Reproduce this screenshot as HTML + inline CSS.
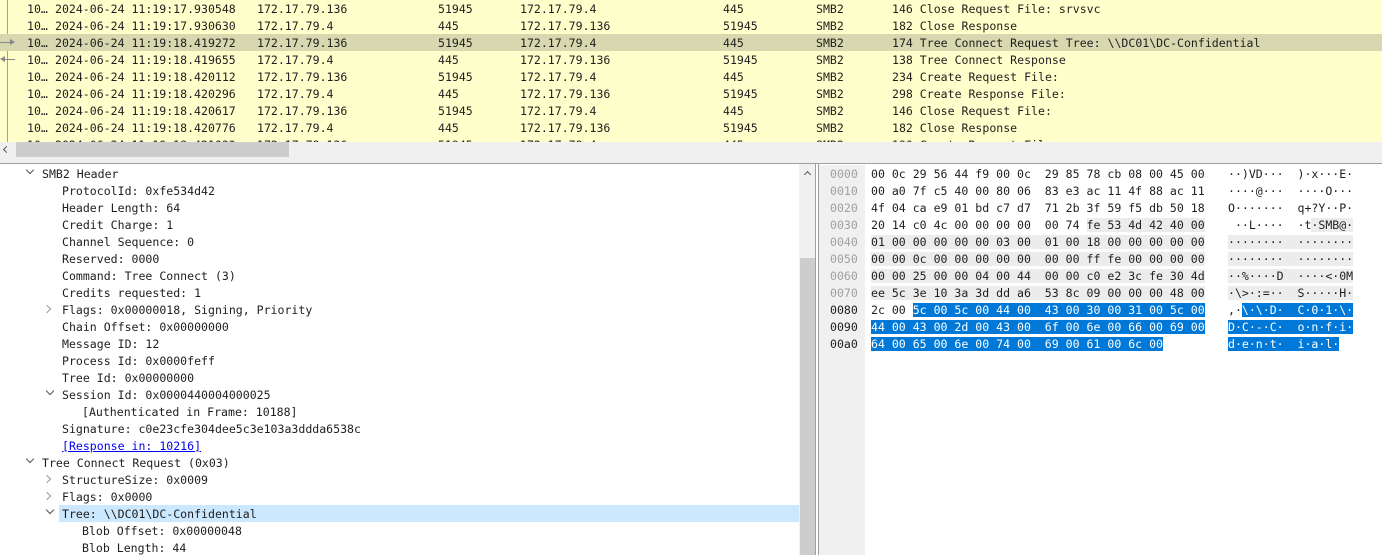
<!DOCTYPE html>
<html><head><meta charset="utf-8"><style>
*{margin:0;padding:0;box-sizing:border-box}
body{width:1382px;height:555px;overflow:hidden;background:#fff;font-family:"DejaVu Sans Mono","Liberation Mono",monospace;font-size:11.55px;color:#1e1e1e;position:relative}
.pl{position:absolute;left:0;top:0;width:1382px;height:142px;background:#ffffcc;overflow:hidden}
.r{position:absolute;left:0;width:1382px;height:17px;line-height:18px;white-space:pre}
.r span{position:absolute;top:0}
.hl{background:#d8d8b0}
.vline{position:absolute;left:7px;top:0;width:1px;height:142px;background:#a0a0a0}
.hs{position:absolute;left:0;top:142px;width:1382px;height:16px;background:#f0f0f0}
.sep{position:absolute;left:0;top:163px;width:1382px;height:1px;background:#a0a0a0}
.t{position:absolute;height:17px;line-height:18px;white-space:pre}
.hx{position:absolute;height:17px;line-height:18px;white-space:pre}
.g{background:#ececec}.b{background:#0078d7;color:#fff}
.arr{position:absolute;width:6px;height:6px;border-right:1.3px solid #555;border-bottom:1.3px solid #555}
</style></head><body>
<div class="pl">
<div class="vline"></div>
<div class="r" style="top:0"><span style="left:27px">10…</span><span style="left:55px">2024-06-24 11:19:17.930548</span><span style="left:257px">172.17.79.136</span><span style="left:438px">51945</span><span style="left:520px">172.17.79.4</span><span style="left:723px">445</span><span style="left:816px">SMB2</span><span style="left:892px">146 Close Request File: srvsvc</span></div>
<div class="r" style="top:17px"><span style="left:27px">10…</span><span style="left:55px">2024-06-24 11:19:17.930630</span><span style="left:257px">172.17.79.4</span><span style="left:438px">445</span><span style="left:520px">172.17.79.136</span><span style="left:723px">51945</span><span style="left:816px">SMB2</span><span style="left:892px">182 Close Response</span></div>
<div class="r hl" style="top:34px"><span style="left:27px">10…</span><span style="left:55px">2024-06-24 11:19:18.419272</span><span style="left:257px">172.17.79.136</span><span style="left:438px">51945</span><span style="left:520px">172.17.79.4</span><span style="left:723px">445</span><span style="left:816px">SMB2</span><span style="left:892px">174 Tree Connect Request Tree: \\DC01\DC-Confidential</span><span style="left:0;top:8px;width:14px;height:1px;background:#888"></span><span style="left:10px;top:5px;width:0;height:0;border-left:5px solid #888;border-top:3px solid transparent;border-bottom:3px solid transparent"></span></div>
<div class="r" style="top:51px"><span style="left:27px">10…</span><span style="left:55px">2024-06-24 11:19:18.419655</span><span style="left:257px">172.17.79.4</span><span style="left:438px">445</span><span style="left:520px">172.17.79.136</span><span style="left:723px">51945</span><span style="left:816px">SMB2</span><span style="left:892px">138 Tree Connect Response</span><span style="left:2px;top:8px;width:13px;height:1px;background:#888"></span><span style="left:0;top:5px;width:0;height:0;border-right:5px solid #888;border-top:3px solid transparent;border-bottom:3px solid transparent"></span></div>
<div class="r" style="top:68px"><span style="left:27px">10…</span><span style="left:55px">2024-06-24 11:19:18.420112</span><span style="left:257px">172.17.79.136</span><span style="left:438px">51945</span><span style="left:520px">172.17.79.4</span><span style="left:723px">445</span><span style="left:816px">SMB2</span><span style="left:892px">234 Create Request File:</span></div>
<div class="r" style="top:85px"><span style="left:27px">10…</span><span style="left:55px">2024-06-24 11:19:18.420296</span><span style="left:257px">172.17.79.4</span><span style="left:438px">445</span><span style="left:520px">172.17.79.136</span><span style="left:723px">51945</span><span style="left:816px">SMB2</span><span style="left:892px">298 Create Response File:</span></div>
<div class="r" style="top:102px"><span style="left:27px">10…</span><span style="left:55px">2024-06-24 11:19:18.420617</span><span style="left:257px">172.17.79.136</span><span style="left:438px">51945</span><span style="left:520px">172.17.79.4</span><span style="left:723px">445</span><span style="left:816px">SMB2</span><span style="left:892px">146 Close Request File:</span></div>
<div class="r" style="top:119px"><span style="left:27px">10…</span><span style="left:55px">2024-06-24 11:19:18.420776</span><span style="left:257px">172.17.79.4</span><span style="left:438px">445</span><span style="left:520px">172.17.79.136</span><span style="left:723px">51945</span><span style="left:816px">SMB2</span><span style="left:892px">182 Close Response</span></div>
<div class="r" style="top:136px"><span style="left:27px">10…</span><span style="left:55px">2024-06-24 11:19:18.421033</span><span style="left:257px">172.17.79.136</span><span style="left:438px">51945</span><span style="left:520px">172.17.79.4</span><span style="left:723px">445</span><span style="left:816px">SMB2</span><span style="left:892px">190 Create Request File:</span></div>
</div>
<div class="hs"><div style="position:absolute;left:4px;top:5px;width:5px;height:5px;border-left:1.5px solid #555;border-bottom:1.5px solid #555;transform:rotate(45deg)"></div><div style="position:absolute;left:16px;top:0;width:273px;height:15px;background:#cdcdcd"></div></div>
<div style="position:absolute;left:0;top:158px;width:1382px;height:5px;background:#f0f0f0"></div>
<div class="sep"></div>

<div class="arr" style="left:27px;top:167px;transform:rotate(45deg)"></div>
<div class="t" style="left:42px;top:165px">SMB2 Header</div>
<div class="t" style="left:62px;top:182px">ProtocolId: 0xfe534d42</div>
<div class="t" style="left:62px;top:199px">Header Length: 64</div>
<div class="t" style="left:62px;top:216px">Credit Charge: 1</div>
<div class="t" style="left:62px;top:233px">Channel Sequence: 0</div>
<div class="t" style="left:62px;top:250px">Reserved: 0000</div>
<div class="t" style="left:62px;top:267px">Command: Tree Connect (3)</div>
<div class="t" style="left:62px;top:284px">Credits requested: 1</div>
<div class="arr" style="left:44px;top:306px;transform:rotate(-45deg);border-color:#999"></div>
<div class="t" style="left:62px;top:301px">Flags: 0x00000018, Signing, Priority</div>
<div class="t" style="left:62px;top:318px">Chain Offset: 0x00000000</div>
<div class="t" style="left:62px;top:335px">Message ID: 12</div>
<div class="t" style="left:62px;top:352px">Process Id: 0x0000feff</div>
<div class="t" style="left:62px;top:369px">Tree Id: 0x00000000</div>
<div class="arr" style="left:47px;top:388px;transform:rotate(45deg)"></div>
<div class="t" style="left:62px;top:386px">Session Id: 0x0000440004000025</div>
<div class="t" style="left:82px;top:403px">[Authenticated in Frame: 10188]</div>
<div class="t" style="left:62px;top:420px">Signature: c0e23cfe304dee5c3e103a3ddda6538c</div>
<div class="t" style="left:62px;top:437px;color:#0000ee;text-decoration:underline">[Response in: 10216]</div>
<div class="arr" style="left:27px;top:456px;transform:rotate(45deg)"></div>
<div class="t" style="left:42px;top:454px">Tree Connect Request (0x03)</div>
<div class="arr" style="left:44px;top:476px;transform:rotate(-45deg);border-color:#999"></div>
<div class="t" style="left:62px;top:471px">StructureSize: 0x0009</div>
<div class="arr" style="left:44px;top:493px;transform:rotate(-45deg);border-color:#999"></div>
<div class="t" style="left:62px;top:488px">Flags: 0x0000</div>
<div style="position:absolute;left:59px;top:505px;width:740px;height:17px;background:#cce8ff"></div>
<div class="arr" style="left:47px;top:507px;transform:rotate(45deg)"></div>
<div class="t" style="left:62px;top:505px">Tree: \\DC01\DC-Confidential</div>
<div class="t" style="left:82px;top:522px">Blob Offset: 0x00000048</div>
<div class="t" style="left:82px;top:539px">Blob Length: 44</div>

<div style="position:absolute;left:799px;top:164px;width:17px;height:391px;background:#f0f0f0"></div>
<div style="position:absolute;left:805px;top:172px;width:5px;height:5px;border-left:1.5px solid #555;border-top:1.5px solid #555;transform:rotate(45deg)"></div>
<div style="position:absolute;left:800px;top:258px;width:15px;height:297px;background:#cdcdcd"></div>
<div style="position:absolute;left:815px;top:164px;width:1px;height:391px;background:#a0a0a0"></div>
<div style="position:absolute;left:818px;top:164px;width:1px;height:391px;background:#a0a0a0"></div>
<div style="position:absolute;left:819px;top:165px;width:46px;height:390px;background:#f0f0f0"></div>

<div class="hx" style="left:830px;top:165px;color:#a0a0a0">0000</div>
<div class="hx" style="left:830px;top:182px;color:#a0a0a0">0010</div>
<div class="hx" style="left:830px;top:199px;color:#a0a0a0">0020</div>
<div class="hx" style="left:830px;top:216px;color:#a0a0a0">0030</div>
<div class="hx" style="left:830px;top:233px;color:#a0a0a0">0040</div>
<div class="hx" style="left:830px;top:250px;color:#a0a0a0">0050</div>
<div class="hx" style="left:830px;top:267px;color:#a0a0a0">0060</div>
<div class="hx" style="left:830px;top:284px;color:#a0a0a0">0070</div>
<div class="hx" style="left:830px;top:301px">0080</div>
<div class="hx" style="left:830px;top:318px">0090</div>
<div class="hx" style="left:830px;top:335px">00a0</div>

<div class="hx" style="left:871px;top:165px">00 0c 29 56 44 f9 00 0c  29 85 78 cb 08 00 45 00</div>
<div class="hx" style="left:871px;top:182px">00 a0 7f c5 40 00 80 06  83 e3 ac 11 4f 88 ac 11</div>
<div class="hx" style="left:871px;top:199px">4f 04 ca e9 01 bd c7 d7  71 2b 3f 59 f5 db 50 18</div>
<div class="hx" style="left:871px;top:216px">20 14 c0 4c 00 00 00 00  00 74 <span class="g">fe 53 4d 42 40 00</span></div>
<div class="hx" style="left:871px;top:233px"><span class="g">01 00 00 00 00 00 03 00  01 00 18 00 00 00 00 00</span></div>
<div class="hx" style="left:871px;top:250px"><span class="g">00 00 0c 00 00 00 00 00  00 00 ff fe 00 00 00 00</span></div>
<div class="hx" style="left:871px;top:267px"><span class="g">00 00 25 00 00 04 00 44  00 00 c0 e2 3c fe 30 4d</span></div>
<div class="hx" style="left:871px;top:284px"><span class="g">ee 5c 3e 10 3a 3d dd a6  53 8c 09 00 00 00 48 00</span></div>
<div class="hx" style="left:871px;top:301px">2c 00 <span class="b">5c 00 5c 00 44 00  43 00 30 00 31 00 5c 00</span></div>
<div class="hx" style="left:871px;top:318px"><span class="b">44 00 43 00 2d 00 43 00  6f 00 6e 00 66 00 69 00</span></div>
<div class="hx" style="left:871px;top:335px"><span class="b">64 00 65 00 6e 00 74 00  69 00 61 00 6c 00</span></div>

<div class="hx" style="left:1228px;top:165px">··)VD···  )·x···E·</div>
<div class="hx" style="left:1228px;top:182px">····@···  ····O···</div>
<div class="hx" style="left:1228px;top:199px">O·······  q+?Y··P·</div>
<div class="hx" style="left:1228px;top:216px"> ··L····  ·t<span class="g">·SMB@·</span></div>
<div class="hx" style="left:1228px;top:233px"><span class="g">········  ········</span></div>
<div class="hx" style="left:1228px;top:250px"><span class="g">········  ········</span></div>
<div class="hx" style="left:1228px;top:267px"><span class="g">··%····D  ····&lt;·0M</span></div>
<div class="hx" style="left:1228px;top:284px"><span class="g">·\&gt;·:=··  S·····H·</span></div>
<div class="hx" style="left:1228px;top:301px">,·<span class="b">\·\·D·  C·0·1·\·</span></div>
<div class="hx" style="left:1228px;top:318px"><span class="b">D·C·-·C·  o·n·f·i·</span></div>
<div class="hx" style="left:1228px;top:335px"><span class="b">d·e·n·t·  i·a·l·</span></div>
</body></html>
